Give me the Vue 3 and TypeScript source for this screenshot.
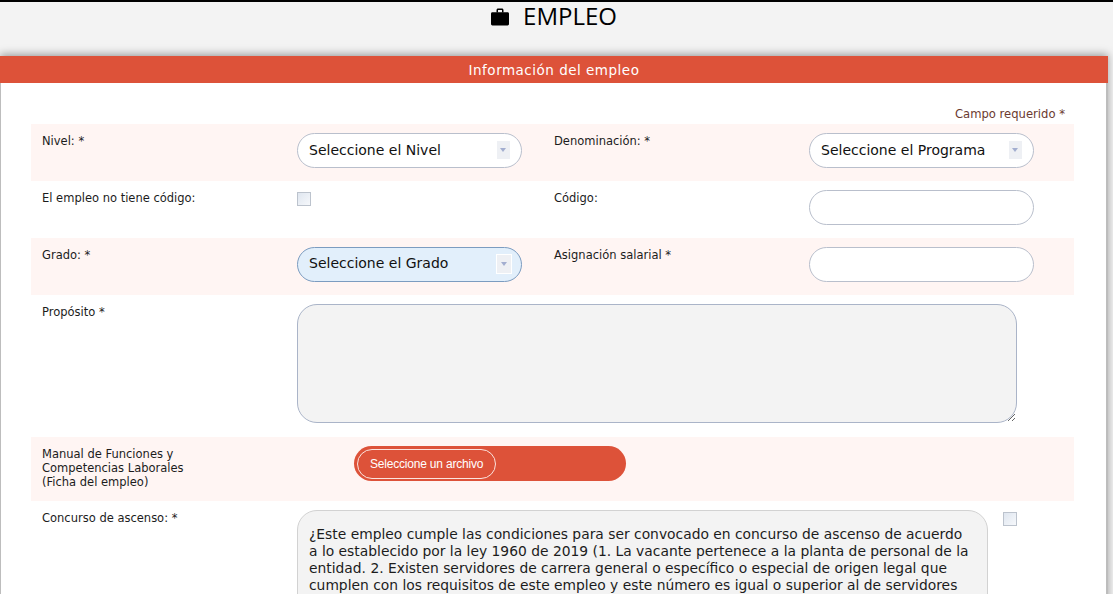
<script setup lang="ts">
const ascensoLines: string[] = [
  '¿Este empleo cumple las condiciones para ser convocado en concurso de ascenso de acuerdo',
  'a lo establecido por la ley 1960 de 2019 (1. La vacante pertenece a la planta de personal de la',
  'entidad. 2. Existen servidores de carrera general o específico o especial de origen legal que',
  'cumplen con los requisitos de este empleo y este número es igual o superior al de servidores',
]
</script>

<template>
  <div class="page">
    <h1 class="title">
      <svg class="title-icon" viewBox="0 0 20 18" width="20" height="18">
        <path d="M6.500 4.500V2.200C6.500 1.200 7.200.6 8.100.6h3.800c.9 0 1.600.6 1.600 1.600v2.300h-1.500V2.100H8v2.400z" fill="#000" />
        <path d="M2.400 4.200h15.200c.8 0 1.400.6 1.400 1.400v10.400c0 .8-.6 1.400-1.400 1.400H2.400c-.8 0-1.400-.6-1.400-1.400V5.600c0-.8.6-1.400 1.400-1.400z" fill="#000" />
      </svg>
      <span>EMPLEO</span>
    </h1>

    <section class="panel">
      <header class="panel-head">Información del empleo</header>
      <div class="panel-body">
        <p class="required">Campo requerido *</p>

        <div class="row tinted">
          <label>Nivel: *</label>
          <div class="select">
            <span>Seleccione el Nivel</span>
            <i class="arrow"></i>
          </div>
          <label>Denominación: *</label>
          <div class="select">
            <span>Seleccione el Programa</span>
            <i class="arrow"></i>
          </div>
        </div>

        <div class="row">
          <label>El empleo no tiene código:</label>
          <div><i class="check"></i></div>
          <label>Código:</label>
          <input class="field" type="text" />
        </div>

        <div class="row tinted">
          <label>Grado: *</label>
          <div class="select focus">
            <span>Seleccione el Grado</span>
            <i class="arrow"></i>
          </div>
          <label>Asignación salarial *</label>
          <input class="field" type="text" />
        </div>

        <div class="row wide">
          <label>Propósito *</label>
          <textarea class="area"></textarea>
        </div>

        <div class="row wide tinted file-row">
          <label>Manual de Funciones y<br />Competencias Laborales<br />(Ficha del empleo)</label>
          <div class="file">
            <span class="file-btn">Seleccione un archivo</span>
          </div>
        </div>

        <div class="row wide last">
          <label>Concurso de ascenso: *</label>
          <div class="ascenso">
            <div class="ascenso-box">
              <span v-for="line in ascensoLines" :key="line">{{ line }}</span>
            </div>
            <i class="check"></i>
          </div>
        </div>
      </div>
    </section>
  </div>
</template>

<style scoped>
.page {
  height: 592px;
  overflow: hidden;
  border-top: 2px solid #000;
  background: #f3f3f3;
  font-family: "DejaVu Sans", sans-serif;
  color: #1c1c1c;
}

.title {
  display: flex;
  align-items: center;
  justify-content: center;
  gap: 13px;
  height: 54px;
  margin: 0;
  padding: 0 6px 26px 0;
  box-sizing: border-box;
  font-family: "Open Sans", sans-serif;
  font-size: 24px;
  font-weight: 400;
  line-height: 28px;
  color: #000;
}

.title-icon {
  display: block;
  margin-top: 1px;
}

.panel {
  width: 1108px;
  background: #fff;
  border-right: 2px solid #bdbdbd;
  border-left: 1px solid #bdbdbd;
  box-sizing: border-box;
  box-shadow: 0 -2px 8px rgba(0, 0, 0, 0.35);
}

.panel-head {
  height: 27px;
  margin: 0 -2px 0 -1px;
  background: #dd5239;
  color: #fff;
  font-size: 13.500px;
  line-height: 28px;
  text-align: center;
  letter-spacing: 0.5px;
}

.panel-body {
  padding: 0 32px 0 30px;
}

.required {
  margin: 0;
  height: 41px;
  padding: 24px 9px 0 0;
  box-sizing: border-box;
  font-size: 11.600px;
  line-height: 14px;
  text-align: right;
  color: #6b3a30;
}

.row {
  display: grid;
  grid-template-columns: 255px 257px 255px 1fr;
  align-items: start;
  height: 57px;
  padding: 9px 0 0 11px;
  box-sizing: border-box;
}

.row.wide {
  grid-template-columns: 255px 1fr;
  height: 142px;
}

.row.file-row {
  height: 64px;
}

.row.last {
  height: 200px;
}

.tinted {
  background: #fff5f3;
}

label {
  padding-top: 1px;
  font-size: 11.500px;
  line-height: 14px;
}

.select {
  display: flex;
  align-items: center;
  justify-content: space-between;
  width: 225px;
  height: 35px;
  padding: 0 11px 2px 11px;
  box-sizing: border-box;
  border: 1px solid #b9bfcc;
  border-radius: 18px;
  background: #fff;
  font-size: 14px;
  color: #111;
}

.select.focus {
  border-color: #7c9cc0;
  background: #e2effb;
}

.select.focus span {
  margin-bottom: 2px;
}

.arrow {
  position: relative;
  display: block;
  width: 13px;
  height: 18px;
  background: #eef0f4;
}

.select.focus .arrow {
  width: 14px;
  height: 18px;
  border: 1px solid #fff;
  margin-right: -2px;
}

.arrow::after {
  content: "";
  position: absolute;
  top: 7px;
  left: 3px;
  border-top: 4px solid #a3aed0;
  border-left: 3.500px solid transparent;
  border-right: 3.500px solid transparent;
}

.select.focus .arrow::after {
  top: 7px;
  left: 4px;
}

.check {
  display: block;
  width: 12px;
  height: 12px;
  margin-top: 2px;
  border: 1px solid #bcc3cd;
  background: linear-gradient(135deg, #dfe6ef, #f6f8fb);
}

.field {
  display: block;
  width: 225px;
  height: 35px;
  padding: 0 12px;
  box-sizing: border-box;
  border: 1px solid #b9bfcc;
  border-radius: 18px;
  background: #fff;
}

.area {
  display: block;
  width: 720px;
  height: 119px;
  box-sizing: border-box;
  border: 1px solid #aab4c8;
  border-radius: 20px;
  background: #f3f3f3;
}

.file {
  display: flex;
  align-items: center;
  width: 272px;
  height: 35px;
  margin-left: 57px;
  padding: 0 3px;
  box-sizing: border-box;
  border-radius: 18px;
  background: #dd5239;
}

.file-btn {
  display: block;
  height: 30px;
  padding: 0 12px;
  box-sizing: border-box;
  border: 1px solid #fbe3de;
  border-radius: 15px;
  color: #fff;
  font-family: "Liberation Sans", sans-serif;
  font-size: 12px;
  letter-spacing: -0.2px;
  line-height: 29px;
}

.ascenso {
  display: flex;
  align-items: flex-start;
  gap: 15px;
}

.ascenso-box {
  width: 691px;
  height: 180px;
  padding: 15px 11px;
  box-sizing: border-box;
  border: 1px solid #d2d2d2;
  border-radius: 20px;
  background: #f3f3f3;
  font-size: 13.850px;
  line-height: 17px;
  white-space: nowrap;
}

.ascenso-box span {
  display: block;
}
</style>

<style>
html,
body {
  margin: 0;
  overflow: hidden;
  background: #f3f3f3;
}
</style>
